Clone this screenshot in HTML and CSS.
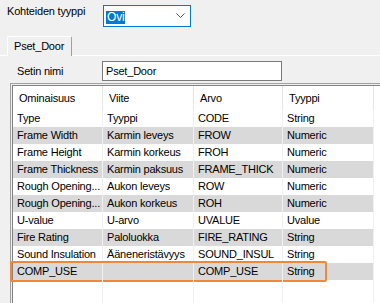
FILE: index.html
```html
<!DOCTYPE html>
<html lang="fi">
<head>
    <meta charset="UTF-8">
    <title>Kohteiden tyyppi</title>
    <link rel="stylesheet" href="styles.css">
</head>
<body>
    <div class="type-row">
        <label class="type-label">Kohteiden tyyppi</label>
        <div class="combo">
            <span class="combo-value">Ovi</span>
            <svg class="combo-arrow" width="9" height="5" viewBox="0 0 9 5">
                <polyline points="0.5,0.5 4.5,4.5 8.5,0.5" fill="none" stroke="#555" stroke-width="1"/>
            </svg>
        </div>
    </div>

    <div class="tabstrip">
        <div class="tab">Pset_Door</div>
    </div>

    <div class="tab-page">
        <div class="name-row">
            <label class="name-label">Setin nimi</label>
            <div class="textbox">Pset_Door</div>
        </div>

        <!-- Property list -->
        <div class="list">
            <div class="grid">
                <div class="row header">
                    <div class="cell">Ominaisuus</div>
                    <div class="cell">Viite</div>
                    <div class="cell">Arvo</div>
                    <div class="cell">Tyyppi</div>
                    <div class="cell filler"></div>
                </div>
                <div class="row">
                    <div class="cell">Type</div>
                    <div class="cell">Tyyppi</div>
                    <div class="cell">CODE</div>
                    <div class="cell">String</div>
                    <div class="cell filler"></div>
                </div>
                <div class="row alt">
                    <div class="cell">Frame Width</div>
                    <div class="cell">Karmin leveys</div>
                    <div class="cell">FROW</div>
                    <div class="cell">Numeric</div>
                    <div class="cell filler"></div>
                </div>
                <div class="row">
                    <div class="cell">Frame Height</div>
                    <div class="cell">Karmin korkeus</div>
                    <div class="cell">FROH</div>
                    <div class="cell">Numeric</div>
                    <div class="cell filler"></div>
                </div>
                <div class="row alt">
                    <div class="cell">Frame Thickness</div>
                    <div class="cell">Karmin paksuus</div>
                    <div class="cell">FRAME_THICK</div>
                    <div class="cell">Numeric</div>
                    <div class="cell filler"></div>
                </div>
                <div class="row">
                    <div class="cell">Rough Opening...</div>
                    <div class="cell">Aukon leveys</div>
                    <div class="cell">ROW</div>
                    <div class="cell">Numeric</div>
                    <div class="cell filler"></div>
                </div>
                <div class="row alt">
                    <div class="cell">Rough Opening...</div>
                    <div class="cell">Aukon korkeus</div>
                    <div class="cell">ROH</div>
                    <div class="cell">Numeric</div>
                    <div class="cell filler"></div>
                </div>
                <div class="row">
                    <div class="cell">U-value</div>
                    <div class="cell">U-arvo</div>
                    <div class="cell">UVALUE</div>
                    <div class="cell">Uvalue</div>
                    <div class="cell filler"></div>
                </div>
                <div class="row alt">
                    <div class="cell">Fire Rating</div>
                    <div class="cell">Paloluokka</div>
                    <div class="cell">FIRE_RATING</div>
                    <div class="cell">String</div>
                    <div class="cell filler"></div>
                </div>
                <div class="row">
                    <div class="cell">Sound Insulation</div>
                    <div class="cell">Ääneneristävyys</div>
                    <div class="cell">SOUND_INSUL</div>
                    <div class="cell">String</div>
                    <div class="cell filler"></div>
                </div>
                <div class="row alt">
                    <div class="cell">COMP_USE</div>
                    <div class="cell"></div>
                    <div class="cell">COMP_USE</div>
                    <div class="cell">String</div>
                    <div class="cell filler"></div>
                    <span class="mark"></span>
                </div>
                <div class="row empty">
                    <div class="cell"></div>
                    <div class="cell"></div>
                    <div class="cell"></div>
                    <div class="cell"></div>
                    <div class="cell filler"></div>
                </div>
            </div>
        </div>
    </div>
</body>
</html>
```

FILE: styles.css
```css
body {
    margin: 0;
    background-color: #f0f0f0;
    font-family: "Liberation Sans", Arial, sans-serif;
    font-size: 11px;
    letter-spacing: -0.2px;
    color: #000;
    overflow: hidden;
    height: 303px;
    display: flex;
    flex-direction: column;
}
.type-row {
    display: flex;
    align-items: flex-start;
    padding: 5px 0 0 7px;
}
.type-label {
    width: 96px;
    line-height: 13px;
}
.combo {
    width: 79px;
    height: 20px;
    border: 1px solid #0078d7;
    background: white;
    display: flex;
    align-items: center;
    justify-content: space-between;
    padding: 0 5px 0 2px;
}
.combo-value {
    background-color: #0078d7;
    color: white;
    font-size: 12px;
    line-height: 13px;
    padding: 0 1px;
    margin-top: 3px;
}
.combo-arrow {
    margin-top: -1px;
}
.tabstrip {
    display: flex;
    margin-top: 9px;
    height: 19px;
    border-bottom: 1px solid white;
}
.tab {
    margin-left: 7px;
    margin-bottom: -1px;
    width: 57px;
    height: 19px;
    line-height: 19px;
    padding-left: 6px;
    background: #f0f0f0;
    border-top: 1px solid white;
    border-left: 1px solid white;
    border-right: 1px solid #a0a0a0;
    border-radius: 2px 2px 0 0;
}
.tab-page {
    flex: 1;
    display: flex;
    flex-direction: column;
    min-height: 0;
}
.name-row {
    display: flex;
    align-items: center;
    padding: 5px 0 0 17px;
}
.name-label {
    width: 85px;
}
.textbox {
    width: 175px;
    height: 18px;
    line-height: 18px;
    padding-left: 3px;
    border: 1px solid #7a7a7a;
    background: white;
}
.list {
    flex: 1;
    display: flex;
    margin: 2px 0 0 10px;
    border-top: 1px solid #a0a0a0;
    border-left: 1px solid #a0a0a0;
    padding: 1px 0 0 1px;
    background: #f0f0f0;
    min-height: 0;
}
.grid {
    flex: 1;
    display: flex;
    flex-direction: column;
    border-top: 1px solid #828282;
    border-left: 1px solid #828282;
    background: white;
}
.row {
    display: grid;
    grid-template-columns: 90px 91px 89px 91px 1fr;
    height: 17px;
    line-height: 17px;
    position: relative;
    flex-shrink: 0;
}
.row.empty {
    flex: 1;
}
.row .cell {
    border-right: 1px solid #f0f0f0;
    padding-left: 4px;
    white-space: nowrap;
    overflow: hidden;
}
.row.alt .cell {
    background-color: #d9d9d9;
}
.row.alt .cell.filler {
    background-color: white;
}
.row .cell.filler {
    border-right: none;
}
.row.header {
    height: 24px;
    line-height: 24px;
}
.row.header .cell {
    padding-left: 6px;
    border-right-color: #e5e5e5;
}
.mark {
    position: absolute;
    left: -3px;
    top: -2px;
    width: 313px;
    height: 17px;
    border: 2px solid #f0883a;
    border-radius: 2px;
}
```
